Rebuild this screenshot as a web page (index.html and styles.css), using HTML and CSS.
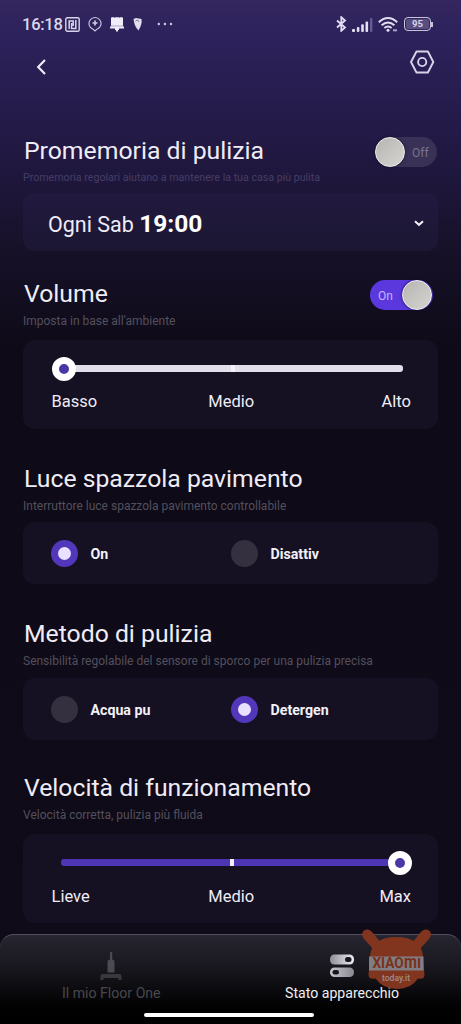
FILE: index.html
```html
<!DOCTYPE html>
<html lang="it">
<head>
<meta charset="utf-8">
<title>Stato apparecchio</title>
<link rel="stylesheet" href="styles.css">
</head>
<body>
<div class="screen">
  <header class="status">
    <div class="status-left">
      <span class="clock">16:18</span>
      <svg width="15" height="15" viewBox="0 0 15 15" fill="none" stroke="#d9d4ea" stroke-width="1.4"><rect x=".8" y=".8" width="13.4" height="13.4" rx="1.5"/><path d="M4.200 12V4h4v5M6.600 6v5.500h4.200V3" stroke-width="1.500"/></svg>
      <svg class="pin" width="14" height="16" viewBox="0 0 14 16" fill="none" stroke="#d0cbe4" stroke-width="1.1"><path d="M5 13.200A6 6 0 1 1 9 13.200L7 15z"/><path d="M7 4.500v5M4.500 7h5" stroke-width="1.700"/></svg>
      <svg class="bell" width="14" height="15" viewBox="0 0 14 15" fill="#f0edf8"><path d="M1 1Q1 .2 2 .2H4L4.500 1 5 .2H9L9.500 1 10 .2H12Q13 .2 13 1V9.500H14V11.500H9V13H8V14.500H6V13H5V11.500H0V9.500H1z"/><path d="M1 9h12" stroke="#8f87b4" stroke-width=".7"/></svg>
      <svg class="leaf" width="10" height="14" viewBox="0 0 10 14"><path d="M.5 2L3 1l5.500 1Q9.500 7 5.500 13.500 1.500 10 .5 2z" fill="#e3dfee"/><path d="M2.500 4L4.500 3 6 5" stroke="#716997" stroke-width=".9" fill="none"/></svg>
      <svg class="dots" width="16" height="4" viewBox="0 0 16 4" fill="#d0cbe4"><circle cx="1.800" cy="2" r="1.200"/><circle cx="7.900" cy="2" r="1.200"/><circle cx="14" cy="2" r="1.200"/></svg>
    </div>
    <div class="status-right">
      <svg width="11" height="16" viewBox="0 0 11 16" fill="none" stroke="#e3dff0" stroke-width="1.800"><path d="M1 4.500l8 7-3.700 3.300V1.200L9 4.500l-8 7"/></svg>
      <svg class="signal" width="21" height="14" viewBox="0 0 21 14" fill="#e3dff0"><rect x="0" y="11" width="3" height="3" rx="1"/><rect x="4.800" y="9" width="2.600" height="5" rx="1"/><rect x="9.200" y="6.300" width="2.600" height="7.700" rx="1"/><rect x="13.500" y="3.500" width="2.600" height="10.500" rx="1"/><rect x="18" y="0" width="2.400" height="14" rx="1" fill="#655a91"/></svg>
      <svg class="wifi" width="20" height="15" viewBox="0 0 20 15" fill="none" stroke="#e3dff0" stroke-width="1.900"><path d="M.8 5.200Q10-3 19.200 5.200M3.600 8.300q6.400-5.600 12.800 0M6.400 11q3.600-3 7.200 0"/><circle cx="10" cy="13.200" r="1.500" fill="#e3dff0" stroke="none"/><path d="M15 13.300h4" stroke="#aaa3c8" stroke-width="2"/></svg>
      <span class="battery"><span class="battery-body">95</span><span class="battery-cap"></span></span>
    </div>
  </header>
  <nav class="nav">
    <svg class="back" width="12" height="18" viewBox="0 0 12 18" fill="none" stroke="#eeeaf8" stroke-width="2.200"><path d="M10 2L3.200 9l6.800 7"/></svg>
    <svg class="gear" width="26" height="26" viewBox="0 0 26 26" fill="none" stroke="#d9d3ea" stroke-width="1.900"><path d="M7.500 2.500h11.400l5.400 10.500-5.400 10.500H7.500L2 13z" stroke-linejoin="round"/><circle cx="13.200" cy="13" r="4.100"/></svg>
  </nav>
  <main class="main">
    <section class="section reminder">
      <div class="head"><h2>Promemoria di pulizia</h2><div class="switch off"><i class="knob"></i><span>Off</span></div></div>
      <p>Promemoria regolari aiutano a mantenere la tua casa più pulita</p>
      <div class="card select"><span class="day">Ogni Sab <b>19:00</b></span>
        <svg width="10" height="7" viewBox="0 0 10 7" fill="none" stroke="#f4f1fb" stroke-width="2"><path d="M1 1.200L5 4.800 9 1.200"/></svg></div>
    </section>
    <section class="section volume">
      <div class="head"><h2>Volume</h2><div class="switch on"><span>On</span><i class="knob"></i></div></div>
      <p>Imposta in base all'ambiente</p>
      <div class="card slider"><div class="rail white"><i class="thumb"></i><i class="tick"></i></div>
        <div class="labels"><span>Basso</span><span>Medio</span><span>Alto</span></div></div>
    </section>
    <section class="section light">
      <div class="head"><h2>Luce spazzola pavimento</h2></div>
      <p>Interruttore luce spazzola pavimento controllabile</p>
      <div class="card choices"><label class="choice"><i class="radio selected"></i>On</label><label class="choice"><i class="radio"></i>Disattiv</label></div>
    </section>
    <section class="section method">
      <div class="head"><h2>Metodo di pulizia</h2></div>
      <p>Sensibilità regolabile del sensore di sporco per una pulizia precisa</p>
      <div class="card choices"><label class="choice"><i class="radio"></i>Acqua pu</label><label class="choice"><i class="radio selected"></i>Detergen</label></div>
    </section>
    <section class="section speed">
      <div class="head"><h2>Velocità di funzionamento</h2></div>
      <p>Velocità corretta, pulizia più fluida</p>
      <div class="card slider"><div class="rail purple"><i class="tick"></i><i class="thumb"></i></div>
        <div class="labels"><span>Lieve</span><span>Medio</span><span>Max</span></div></div>
    </section>
  </main>
  <footer class="tabs">
    <div class="tab">
      <svg width="22" height="30" viewBox="0 0 22 30" fill="#4b4a50"><rect x="10" y="0" width="2.200" height="9"/><path d="M7.500 10Q7.500 7.500 10 7.500h2Q14.500 7.500 14.500 10V20.500h-7z"/><path d="M2.500 22h17Q21.500 22 21.500 24v4h-3v-2h-15v2H.5v-4Q.5 22 2.500 22z" fill="#39383d"/></svg>
      <span class="tab-label">Il mio Floor One</span>
    </div>
    <div class="tab active">
      <svg width="24" height="30" viewBox="0 0 24 30"><defs><linearGradient id="pill"><stop offset="0" stop-color="#8f8e98"/><stop offset="1" stop-color="#eeecf3"/></linearGradient><linearGradient id="pill2"><stop offset="0" stop-color="#c7c5cf"/><stop offset="1" stop-color="#8a8992"/></linearGradient></defs><rect y="2.500" width="24" height="10" rx="4.500" fill="url(#pill)"/><rect x="15" y="5" width="6.500" height="5" rx="2.500" fill="#17161c"/><rect y="15.500" width="24" height="9.500" rx="4.500" fill="url(#pill2)"/><rect x="2.500" y="18" width="6.500" height="4.500" rx="2.200" fill="#17161c"/></svg>
      <span class="tab-label">Stato apparecchio</span>
    </div>
    <i class="home-bar"></i>
  </footer>
  <svg class="mark" width="72" height="62" viewBox="0 0 72 62">
    <path d="M1 5Q2 0 7 .500 10 1 12 4L20 14 12 20 4 11Q1 8 1 5zM70 5Q69 0 64 .500 61 1 59 4L51 14 59 20 67 11Q70 8 70 5z" fill="#81351f"/>
    <path d="M9 27Q11 8 35.500 8T62 27L63.500 46Q63 51 57 49.500 50 60 36 60T14.500 49.500Q8 51 7.500 46z" fill="#81351f"/>
    <rect x="8" y="27.500" width="54.500" height="14" fill="#817e83"/>
    <text x="11.500" y="39.400" class="brand"><tspan textLength="31" lengthAdjust="spacingAndGlyphs">XIAO</tspan><tspan x="43" class="brand-mi" textLength="17" lengthAdjust="spacingAndGlyphs">mı</tspan></text>
    <text x="21" y="51.500" textLength="28" lengthAdjust="spacingAndGlyphs" class="domain">today.it</text>
  </svg>
</div>
</body>
</html>
```
FILE: styles.css
```css
* { box-sizing: border-box; }
body { margin: 0; font-family: Roboto, "Liberation Sans", sans-serif; color: #efecf6; }
h2, p { margin: 0; font-weight: 400; white-space: nowrap; }
i { display: block; flex: none; }
svg { display: block; flex: none; }
.screen { position: relative; display: flex; flex-direction: column; width: 461px; height: 1024px; overflow: hidden;
  background: linear-gradient(#34265f 0, #2d225c 35px, #281e51 80px, #231a47 130px, #1d1639 190px, #171129 245px, #120e20 300px, #0e0a17 350px, #0f0b18 1024px); }
.status { display: flex; justify-content: space-between; height: 48px; padding: 0 28px 0 22px; }
.status-left, .status-right { display: flex; align-items: center; height: 48px; }
.clock { width: 43px; padding-top: 2px; font-size: 16.5px; font-weight: 500; line-height: 20px; letter-spacing: -.25px; color: #dcd7ec; }
.pin { margin-left: 8px; }
.bell { margin-left: 8px; }
.leaf { margin-left: 9px; }
.dots { margin-left: 14px; }
.signal { margin-left: 5px; margin-top: 2px; }
.wifi { margin-left: 5px; margin-top: 1px; }
.battery { display: flex; align-items: center; margin-left: 6px; }
.battery-body { width: 27px; height: 14px; border: 1.5px solid #c8c2dd; border-radius: 4px; background: #584f80; box-shadow: inset 0 0 0 1px #30265a; color: #d9d3ea; font-size: 9.5px; font-weight: 700; line-height: 11.5px; text-align: center; }
.battery-cap { width: 2px; height: 5px; background: #c8c2dd; }
.nav { display: flex; justify-content: space-between; height: 87px; padding: 1px 26px 0 35px; }
.back { margin-top: 9px; }
.main { display: flex; flex-direction: column; height: 799px; padding: 0 23px; }
.head { display: flex; justify-content: space-between; height: 30px; }
h2 { padding: 1px 0 0 1px; line-height: 30px; font-size: 24.75px; }
p { height: 16px; margin-top: 4px; padding-top: 1px; line-height: 16px; font-size: 12px; color: #53505d; }
.section { flex: none; }
.reminder { height: 143px; }
.volume { height: 185px; }
.light { height: 155px; }
.method { height: 154px; }
.card { width: 415px; border-radius: 12px; background: #151123; }
.reminder p { font-size: 10.65px; color: #463d66; }
.reminder .card { margin-top: 8px; height: 58px; background: linear-gradient(#21193f, #1c1733); }
.volume .card { margin-top: 12px; }
.light .card { margin-top: 9px; }
.method .card { margin-top: 10px; }
.speed .card { margin-top: 12px; }
.select { display: flex; align-items: center; justify-content: space-between; padding: 3px 14px 0 25px; }
.select svg { margin-bottom: 1px; }
.day { font-size: 21.5px; }
.day b { font-size: 24.5px; font-weight: 700; color: #fff; }
.switch { display: flex; align-items: center; height: 30px; border-radius: 15px; font-size: 12px; }
.off { width: 62px; margin: 2px 1px 0 0; background: #3a3156; color: #7b728f; }
.off span { margin-left: 7px; padding-top: 1px; }
.on { width: 63px; margin: 2px 5px 0 0; background: #5b38de; color: #c4b5ff; }
.on span { width: 24px; margin-left: 8px; padding-top: 1px; }
.knob { width: 30px; height: 30px; border-radius: 50%; background: linear-gradient(135deg, #b7b5b2, #d5d4d1); border: 1px solid #f0eee9; box-shadow: 0 0 3px #17102f; }
.slider { height: 89px; padding: 13px 27px 0 28px; }
.rail { display: flex; align-items: center; height: 7px; margin: 12px 8px 20px 10px; border-radius: 3px; }
.speed .rail { margin-bottom: 21px; }
.white { background: #e2dfea; }
.purple { background: #4e35b3; }
.thumb { width: 24px; height: 24px; border: 7px solid #fff; border-radius: 50%; background: #4b37a5; }
.white .thumb { margin-left: -9px; }
.purple .thumb { margin: 0 -9px 0 auto; }
.tick { width: 4px; height: 7px; background: #f2f0f8; }
.white .tick { margin-left: 155px; }
.purple .tick { margin-left: 169px; }
.labels { display: grid; grid-template-columns: 1fr 1fr 1fr; font-size: 16.5px; line-height: 20px; padding-left: .5px; }
.labels span:nth-child(2) { text-align: center; }
.labels span:nth-child(3) { text-align: right; }
.choices { display: flex; align-items: center; height: 62px; padding: 1px 0 0 28px; }
.choice { display: flex; align-items: center; width: 180px; gap: 12.5px; font-size: 14.2px; font-weight: 700; color: #f3f1f8; }
.radio { width: 27px; height: 27px; border-radius: 50%; background: #353040; }
.selected { border: 7.5px solid #5237bb; background: #e8e1ff; }
.tabs { position: relative; display: flex; justify-content: space-between; height: 90px; padding: 17px 62px 0 62px; border-radius: 14px 14px 0 0; border-top: 1.5px solid #51505c; background: linear-gradient(#272630, #17161d 35px, #020203 70px, #000); }
.tab { display: flex; flex-direction: column; align-items: center; color: #48474d; font-size: 14.1px; white-space: nowrap; }
.tab-label { line-height: 20px; margin-top: 1px; }
.active { color: #efeff1; }
.home-bar { position: absolute; left: 144px; bottom: 7px; width: 170px; height: 4px; border-radius: 2px; background: #fff; }
.mark { position: absolute; left: 361px; top: 929px; }
.brand { font: 700 14px Roboto, sans-serif; fill: #7b301c; }
.brand-mi { font-size: 18px; }
.domain { font: 500 8.5px Roboto, sans-serif; fill: #a38c87; }
```
